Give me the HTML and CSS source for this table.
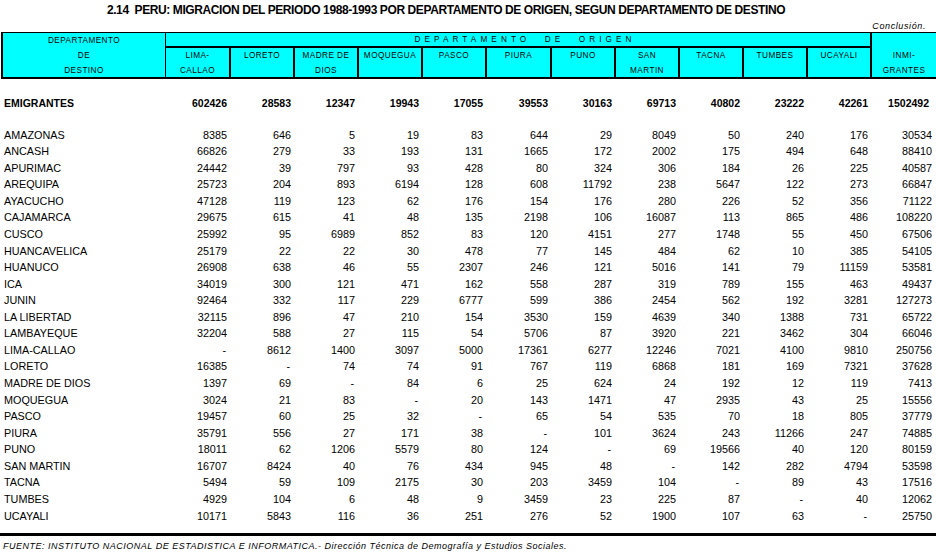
FILE: index.html
```html
<!DOCTYPE html>
<html lang="es">
<head>
<meta charset="utf-8">
<title>2.14 Peru: Migracion del periodo 1988-1993</title>
<link rel="stylesheet" href="styles.css">
</head>
<body>
<h1 class="title">2.14&nbsp; PERU: MIGRACION DEL PERIODO 1988-1993 POR DEPARTAMENTO DE ORIGEN, SEGUN DEPARTAMENTO DE DESTINO</h1>
<p class="note">Conclusión.</p>

<div class="head">
  <div class="hc dest">DEPARTAMENTO<br>DE<br>DESTINO</div>
  <div class="hc origin">DEPARTAMENTO DE ORIGEN</div>
  <div class="hc sub first">LIMA-<br>CALLAO</div>
  <div class="hc sub">LORETO</div>
  <div class="hc sub">MADRE DE<br>DIOS</div>
  <div class="hc sub">MOQUEGUA</div>
  <div class="hc sub">PASCO</div>
  <div class="hc sub">PIURA</div>
  <div class="hc sub">PUNO</div>
  <div class="hc sub">SAN<br>MARTIN</div>
  <div class="hc sub">TACNA</div>
  <div class="hc sub">TUMBES</div>
  <div class="hc sub">UCAYALI</div>
  <div class="hc inmi">INMI-<br>GRANTES</div>
</div>

<div class="data">
  <div class="row total"><span>EMIGRANTES</span><span>602426</span><span>28583</span><span>12347</span><span>19943</span><span>17055</span><span>39553</span><span>30163</span><span>69713</span><span>40802</span><span>23222</span><span>42261</span><span>1502492</span></div>
  <div class="rows">
    <div class="row"><span>AMAZONAS</span><span>8385</span><span>646</span><span>5</span><span>19</span><span>83</span><span>644</span><span>29</span><span>8049</span><span>50</span><span>240</span><span>176</span><span>30534</span></div>
    <div class="row"><span>ANCASH</span><span>66826</span><span>279</span><span>33</span><span>193</span><span>131</span><span>1665</span><span>172</span><span>2002</span><span>175</span><span>494</span><span>648</span><span>88410</span></div>
    <div class="row"><span>APURIMAC</span><span>24442</span><span>39</span><span>797</span><span>93</span><span>428</span><span>80</span><span>324</span><span>306</span><span>184</span><span>26</span><span>225</span><span>40587</span></div>
    <div class="row"><span>AREQUIPA</span><span>25723</span><span>204</span><span>893</span><span>6194</span><span>128</span><span>608</span><span>11792</span><span>238</span><span>5647</span><span>122</span><span>273</span><span>66847</span></div>
    <div class="row"><span>AYACUCHO</span><span>47128</span><span>119</span><span>123</span><span>62</span><span>176</span><span>154</span><span>176</span><span>280</span><span>226</span><span>52</span><span>356</span><span>71122</span></div>
    <div class="row"><span>CAJAMARCA</span><span>29675</span><span>615</span><span>41</span><span>48</span><span>135</span><span>2198</span><span>106</span><span>16087</span><span>113</span><span>865</span><span>486</span><span>108220</span></div>
    <div class="row"><span>CUSCO</span><span>25992</span><span>95</span><span>6989</span><span>852</span><span>83</span><span>120</span><span>4151</span><span>277</span><span>1748</span><span>55</span><span>450</span><span>67506</span></div>
    <div class="row"><span>HUANCAVELICA</span><span>25179</span><span>22</span><span>22</span><span>30</span><span>478</span><span>77</span><span>145</span><span>484</span><span>62</span><span>10</span><span>385</span><span>54105</span></div>
    <div class="row"><span>HUANUCO</span><span>26908</span><span>638</span><span>46</span><span>55</span><span>2307</span><span>246</span><span>121</span><span>5016</span><span>141</span><span>79</span><span>11159</span><span>53581</span></div>
    <div class="row"><span>ICA</span><span>34019</span><span>300</span><span>121</span><span>471</span><span>162</span><span>558</span><span>287</span><span>319</span><span>789</span><span>155</span><span>463</span><span>49437</span></div>
    <div class="row"><span>JUNIN</span><span>92464</span><span>332</span><span>117</span><span>229</span><span>6777</span><span>599</span><span>386</span><span>2454</span><span>562</span><span>192</span><span>3281</span><span>127273</span></div>
    <div class="row"><span>LA LIBERTAD</span><span>32115</span><span>896</span><span>47</span><span>210</span><span>154</span><span>3530</span><span>159</span><span>4639</span><span>340</span><span>1388</span><span>731</span><span>65722</span></div>
    <div class="row"><span>LAMBAYEQUE</span><span>32204</span><span>588</span><span>27</span><span>115</span><span>54</span><span>5706</span><span>87</span><span>3920</span><span>221</span><span>3462</span><span>304</span><span>66046</span></div>
    <div class="row"><span>LIMA-CALLAO</span><span class="nil">-</span><span>8612</span><span>1400</span><span>3097</span><span>5000</span><span>17361</span><span>6277</span><span>12246</span><span>7021</span><span>4100</span><span>9810</span><span>250756</span></div>
    <div class="row"><span>LORETO</span><span>16385</span><span class="nil">-</span><span>74</span><span>74</span><span>91</span><span>767</span><span>119</span><span>6868</span><span>181</span><span>169</span><span>7321</span><span>37628</span></div>
    <div class="row"><span>MADRE DE DIOS</span><span>1397</span><span>69</span><span class="nil">-</span><span>84</span><span>6</span><span>25</span><span>624</span><span>24</span><span>192</span><span>12</span><span>119</span><span>7413</span></div>
    <div class="row"><span>MOQUEGUA</span><span>3024</span><span>21</span><span>83</span><span class="nil">-</span><span>20</span><span>143</span><span>1471</span><span>47</span><span>2935</span><span>43</span><span>25</span><span>15556</span></div>
    <div class="row"><span>PASCO</span><span>19457</span><span>60</span><span>25</span><span>32</span><span class="nil">-</span><span>65</span><span>54</span><span>535</span><span>70</span><span>18</span><span>805</span><span>37779</span></div>
    <div class="row"><span>PIURA</span><span>35791</span><span>556</span><span>27</span><span>171</span><span>38</span><span class="nil">-</span><span>101</span><span>3624</span><span>243</span><span>11266</span><span>247</span><span>74885</span></div>
    <div class="row"><span>PUNO</span><span>18011</span><span>62</span><span>1206</span><span>5579</span><span>80</span><span>124</span><span class="nil">-</span><span>69</span><span>19566</span><span>40</span><span>120</span><span>80159</span></div>
    <div class="row"><span>SAN MARTIN</span><span>16707</span><span>8424</span><span>40</span><span>76</span><span>434</span><span>945</span><span>48</span><span class="nil">-</span><span>142</span><span>282</span><span>4794</span><span>53598</span></div>
    <div class="row"><span>TACNA</span><span>5494</span><span>59</span><span>109</span><span>2175</span><span>30</span><span>203</span><span>3459</span><span>104</span><span class="nil">-</span><span>89</span><span>43</span><span>17516</span></div>
    <div class="row"><span>TUMBES</span><span>4929</span><span>104</span><span>6</span><span>48</span><span>9</span><span>3459</span><span>23</span><span>225</span><span>87</span><span class="nil">-</span><span>40</span><span>12062</span></div>
    <div class="row"><span>UCAYALI</span><span>10171</span><span>5843</span><span>116</span><span>36</span><span>251</span><span>276</span><span>52</span><span>1900</span><span>107</span><span>63</span><span class="nil">-</span><span>25750</span></div>
  </div>
</div>

<p class="source">FUENTE: INSTITUTO NACIONAL DE ESTADISTICA E INFORMATICA.- Dirección Técnica de Demografía y Estudios Sociales.</p>
</body>
</html>
```

FILE: styles.css
```css
* {
  box-sizing: border-box;
  margin: 0;
  padding: 0;
}

html, body {
  background: #ffffff;
}

body {
  width: 936px;
  height: 553px;
  overflow: hidden;
  color: #000000;
  font-family: "Liberation Sans", Arial, sans-serif;
}

.title {
  height: 20px;
  line-height: 20px;
  padding-right: 44px;
  text-align: center;
  font-size: 12px;
  font-weight: bold;
  letter-spacing: -0.4px;
  white-space: nowrap;
}

.note {
  height: 12px;
  line-height: 12px;
  padding-right: 10px;
  text-align: right;
  font-size: 9px;
  font-style: italic;
  letter-spacing: 0.6px;
}

/* header block */
.head {
  display: grid;
  grid-template-columns: 162px repeat(5, 64px) 65px repeat(5, 64px) 1fr;
  grid-template-rows: 15px 15px 14px;
  margin-left: 1px;
  border-left: 2px solid #000;
  border-top: 1px solid #000;
  border-bottom: 2px solid #000;
  background: #00ffff;
  font-size: 8.2px;
  letter-spacing: 0.45px;
  line-height: 15px;
  text-align: center;
  white-space: nowrap;
}

.dest {
  grid-column: 1;
  grid-row: 1 / 4;
}

.origin {
  grid-column: 2 / 13;
  grid-row: 1;
  line-height: 13px;
  border-left: 1px solid #000;
  border-bottom: 2px solid #000;
  padding-left: 14px;
  letter-spacing: 4.1px;
  word-spacing: 8px;
}

.sub {
  grid-row: 2 / 4;
  border-left: 2px solid #000;
}

.sub.first {
  border-left: 1px solid #000;
}

.inmi {
  grid-column: 13;
  grid-row: 1 / 4;
  border-left: 2px solid #000;
  padding-top: 15px;
}

/* data block */
.data {
  padding-top: 16px;
}

.row {
  display: grid;
  grid-template-columns: 165px repeat(5, 64px) 65px repeat(5, 64px) 1fr;
  height: 16.57px;
  line-height: 16.57px;
  font-size: 10.8px;
  white-space: nowrap;
}

.row span {
  text-align: right;
  padding-right: 2px;
}

.row span:first-child {
  text-align: left;
  padding-left: 4px;
  padding-right: 0;
}

.row span:last-child {
  padding-right: 4px;
}

.row span.nil {
  padding-right: 3px;
}

.total {
  font-weight: bold;
  font-size: 10.5px;
  margin-bottom: 15px;
}

.total span:last-child {
  padding-right: 7px;
}

.rows {
  border-bottom: 3px solid #000;
  padding-bottom: 9px;
}

.source {
  margin-top: 4px;
  padding-left: 3px;
  height: 12px;
  line-height: 12px;
  font-size: 9px;
  font-style: italic;
  letter-spacing: 0.5px;
  white-space: nowrap;
}
```
